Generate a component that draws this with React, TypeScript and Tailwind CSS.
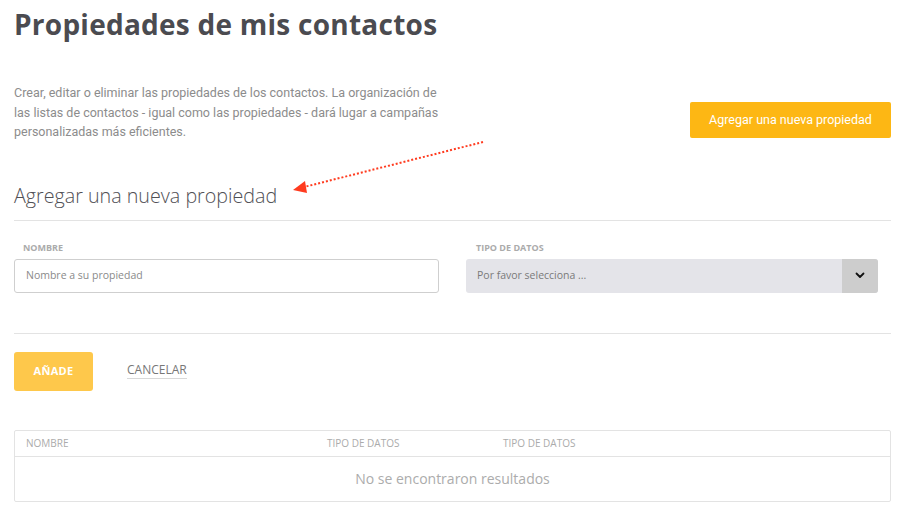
import React from "react";

export default function App() {
  return (
    <div className="relative w-[906px] h-[521px] overflow-hidden bg-white px-[14px] pr-[15px] font-['Open_Sans',sans-serif]">
      <h1 className="pt-[4px] text-[28px] leading-[40px] font-bold text-[#4b4b50] tracking-[0.25px]">
        Propiedades de mis contactos
      </h1>

      <div className="mt-[39px] flex items-start justify-between">
        <p className="w-[430px] font-['Roboto',sans-serif] text-[12.5px] leading-[19.5px] text-[#8c8c8c]">
          Crear, editar o eliminar las propiedades de los contactos. La organización de las listas de contactos - igual como las propiedades - dará lugar a campañas personalizadas más eficientes.
        </p>
        <button className="mt-[19px] h-[36px] w-[201px] rounded-[2px] bg-[#fdb714] font-['Roboto',sans-serif] text-[12.5px] text-white">
          Agregar una nueva propiedad
        </button>
      </div>

      <h2 className="mt-[40px] text-[19.7px] leading-[28px] font-light text-[#505055]">
        Agregar una nueva propiedad
      </h2>
      <div className="mt-[10px] h-px bg-[#e3e3e3]" />

      <div className="mt-[21px] flex">
        <div className="w-[425px]">
          <div className="pl-[9px] text-[9px] leading-[12px] font-bold text-[#ababab]">NOMBRE</div>
          <div className="mt-[5px] flex h-[34px] items-center rounded-[3px] border border-[#cfcfcf] px-[11px] text-[10.5px] text-[#8a8a8a]">
            Nombre a su propiedad
          </div>
        </div>
        <div className="ml-[27px] w-[412px]">
          <div className="pl-[10px] text-[9px] leading-[12px] font-bold text-[#ababab]">TIPO DE DATOS</div>
          <div className="mt-[5px] flex h-[34px] overflow-hidden rounded-[3px] bg-[#e4e4e9]">
            <div className="flex flex-1 items-center px-[11px] text-[10.5px] text-[#7a7a7a]">Por favor selecciona ...</div>
            <div className="flex w-[36px] items-center justify-center bg-[#cdcdcd]">
              <svg width="10" height="7" viewBox="0 0 10 7" fill="none">
                <path d="M1.5 1.5 L5 5 L8.5 1.5" stroke="#111" strokeWidth="1.8" strokeLinecap="round" strokeLinejoin="round" />
              </svg>
            </div>
          </div>
        </div>
      </div>

      <div className="mt-[40px] h-px bg-[#e3e3e3]" />

      <div className="mt-[18px] flex items-center">
        <button className="h-[39px] w-[79px] rounded-[3px] bg-[#fec84b] text-[11px] font-bold text-white tracking-[0.3px]">
          AÑADE
        </button>
        <span className="ml-[34px] border-b border-[#d8d8d8] pb-[1px] text-[12px] leading-[14px] text-[#777]">
          CANCELAR
        </span>
      </div>

      <div className="mt-[39px] h-[72px] rounded-[2px] border border-[#e3e3e3]">
        <div className="flex h-[26px] items-center border-b border-[#e3e3e3] text-[10px] text-[#ababab]">
          <div className="w-[312px] pl-[11px]">NOMBRE</div>
          <div className="w-[176px]">TIPO DE DATOS</div>
          <div>TIPO DE DATOS</div>
        </div>
        <div className="flex h-[44px] items-center justify-center text-[14px] text-[#acacac]">
          No se encontraron resultados
        </div>
      </div>

      <svg className="absolute left-0 top-0 pointer-events-none" width="906" height="521">
        <line x1="483" y1="142" x2="304" y2="187" stroke="#ff3b1f" strokeWidth="2" strokeDasharray="2 2" />
        <polygon points="293,190 305,181 307,193" fill="#ff3b1f" />
      </svg>
    </div>
  );
}
